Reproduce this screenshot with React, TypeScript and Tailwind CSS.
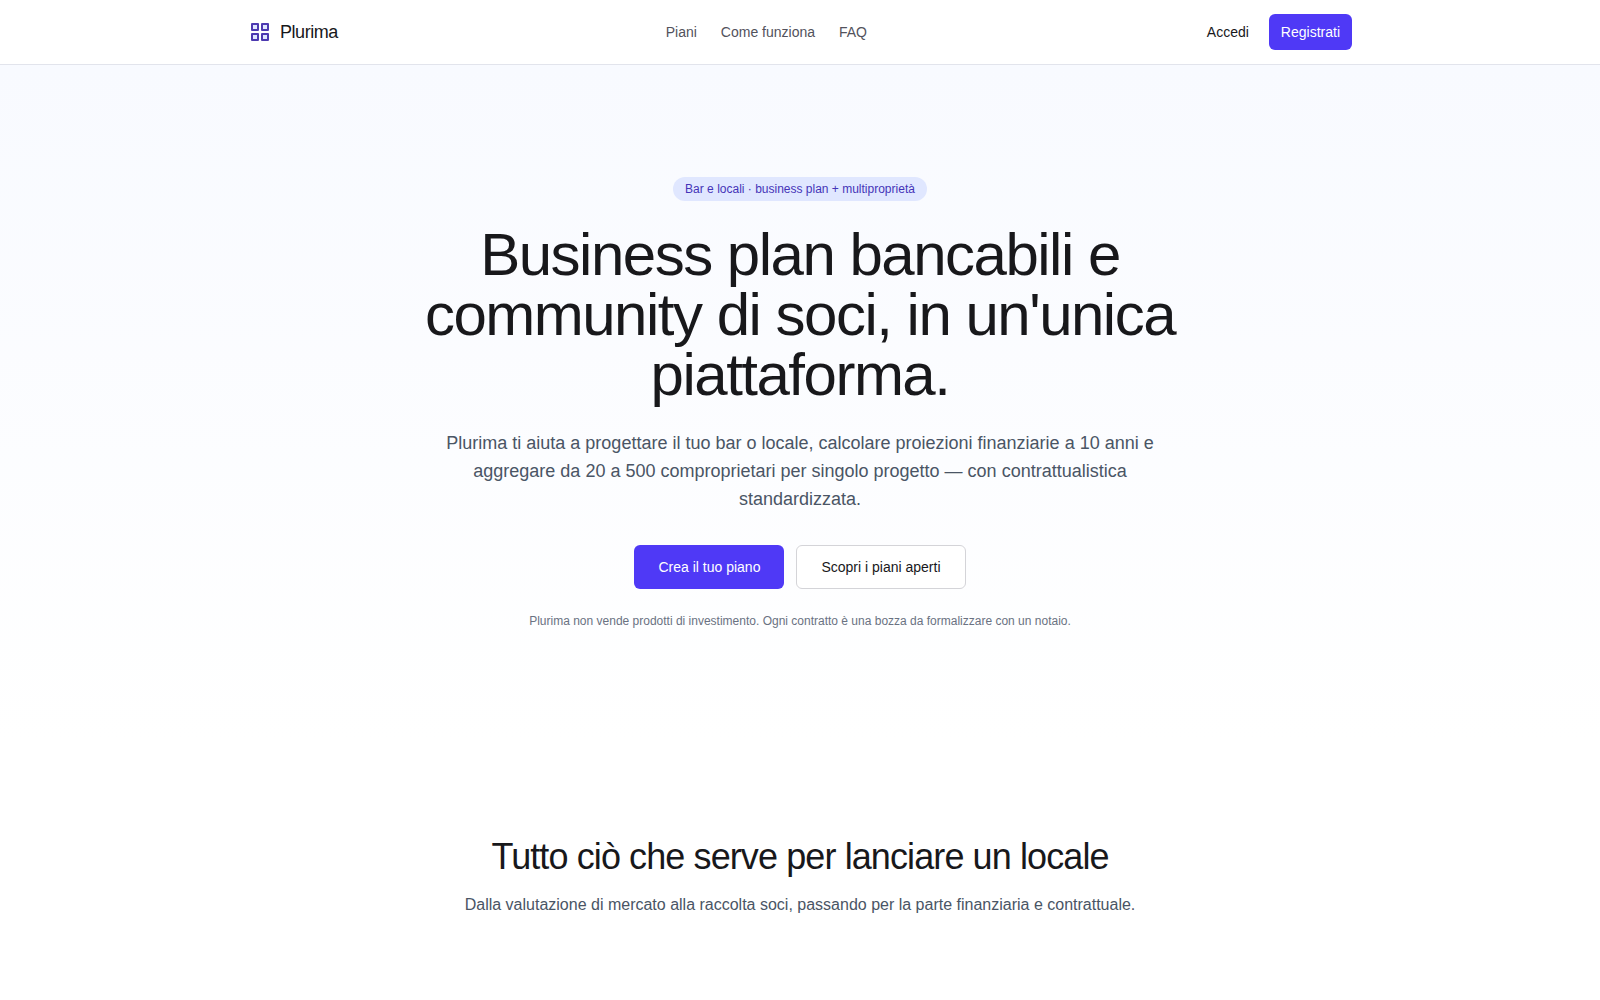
import React from 'react';

const navLinks = [
  { label: 'Piani', href: '#piani' },
  { label: 'Come funziona', href: '#come-funziona' },
  { label: 'FAQ', href: '#faq' },
];

function LogoIcon() {
  return (
    <svg width="24" height="24" viewBox="0 0 24 24" fill="#e0e7ff" stroke="#4d3ab0" strokeWidth="2" strokeLinejoin="round" aria-hidden="true">
      <rect x="4" y="4" width="6" height="6" />
      <rect x="14" y="4" width="6" height="6" />
      <rect x="4" y="14" width="6" height="6" />
      <rect x="14" y="14" width="6" height="6" />
    </svg>
  );
}

function Header() {
  return (
    <header className="border-b border-[#e2e4ec] bg-white">
      <div className="mx-auto flex h-16 max-w-6xl items-center justify-between px-6">
        <a href="#" className="flex items-center gap-2 text-lg tracking-tight text-zinc-900">
          <LogoIcon />
          Plurima
        </a>
        <nav className="flex items-center gap-6 text-sm text-zinc-600">
          {navLinks.map((link) => (
            <a key={link.href} href={link.href}>{link.label}</a>
          ))}
        </nav>
        <div className="flex items-center gap-2 text-sm">
          <a href="#accedi" className="px-3 py-2 text-zinc-900">Accedi</a>
          <button type="button" className="h-9 rounded-md bg-[#4f39f6] px-3 text-white">Registrati</button>
        </div>
      </div>
    </header>
  );
}

function Hero() {
  return (
    <section className="bg-linear-to-b from-[#f8faff] to-white px-6 py-28">
      <div className="mx-auto flex max-w-3xl flex-col items-center text-center">
        <span className="rounded-full bg-indigo-100 px-3 py-1 text-xs text-[#4534b8]">
          Bar e locali · business plan + multiproprietà
        </span>
        <h1 className="mt-6 text-6xl leading-none tracking-tight text-zinc-900">
          Business plan bancabili e community di soci, in un'unica piattaforma.
        </h1>
        <p className="mt-6 text-lg leading-7 text-gray-600">
          Plurima ti aiuta a progettare il tuo bar o locale, calcolare proiezioni finanziarie a 10 anni e
          aggregare da 20 a 500 comproprietari per singolo progetto — con contrattualistica standardizzata.
        </p>
        <div className="mt-8 flex items-center gap-3 text-sm">
          <button type="button" className="h-11 rounded-md bg-[#4f39f6] px-6 text-white">
            Crea il tuo piano
          </button>
          <button type="button" className="h-11 rounded-md border border-zinc-300 bg-white px-6 text-zinc-900">
            Scopri i piani aperti
          </button>
        </div>
        <p className="mt-6 text-xs text-gray-500">
          Plurima non vende prodotti di investimento. Ogni contratto è una bozza da formalizzare con un notaio.
        </p>
      </div>
    </section>
  );
}

function Features() {
  return (
    <section className="px-6 pt-24 text-center">
      <h2 className="text-4xl tracking-tight text-zinc-900">Tutto ciò che serve per lanciare un locale</h2>
      <p className="mt-4 text-base text-gray-600">
        Dalla valutazione di mercato alla raccolta soci, passando per la parte finanziaria e contrattuale.
      </p>
    </section>
  );
}

export default function App() {
  return (
    <div className="min-h-screen bg-white font-['Liberation_Sans',sans-serif]">
      <Header />
      <main>
        <Hero />
        <Features />
      </main>
    </div>
  );
}
